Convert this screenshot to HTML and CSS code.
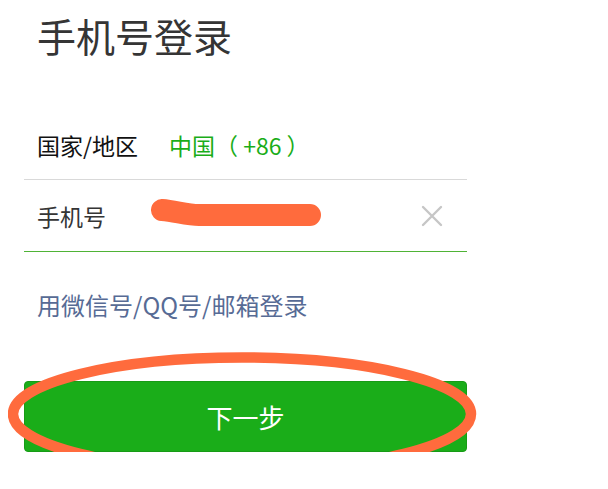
FILE: index.html
```html
<!DOCTYPE html>
<html lang="zh-CN">
<head>
    <meta charset="UTF-8">
    <meta name="viewport" content="width=device-width, initial-scale=1.0">
    <title>手机号登录</title>
    <link rel="stylesheet" href="styles.css">
</head>
<body>

    <h1 class="title">手机号登录</h1>

    <section class="form">
        <div class="row country-row">
            <span class="label">国家/地区</span>
            <span class="country">中国（ +86 ）</span>
        </div>

        <div class="row phone-row">
            <span class="label label-phone">手机号</span>
            <span class="phone-input"></span>
            <svg class="clear-icon" width="22" height="22" viewBox="0 0 22 22">
                <path d="M2 2 L20 20 M20 2 L2 20" stroke="#c6c6c6" stroke-width="2.4" stroke-linecap="round" fill="none"/>
            </svg>
            <!-- redaction scribble -->
            <svg class="scribble" width="180" height="34" viewBox="0 0 180 34">
                <path d="M11 11 C 24 12, 36 16, 48 16 L 159 16" stroke="#ff6b3d" stroke-width="22" stroke-linecap="round" stroke-linejoin="round" fill="none"/>
            </svg>
        </div>

        <a class="alt-login" href="#">用微信号/QQ号/邮箱登录</a>

        <div class="button-wrap">
            <button class="next-btn">下一步</button>
            <svg class="circle-mark" width="480" height="134" viewBox="0 0 480 134">
                <ellipse cx="234" cy="67" rx="229" ry="56.5" stroke="#ff6b3d" stroke-width="10.5" fill="none"/>
            </svg>
        </div>
    </section>

</body>
</html>
```

FILE: styles.css
```css
* {
    margin: 0;
    padding: 0;
    box-sizing: border-box;
}

body {
    background: #ffffff;
    font-family: "Noto Sans CJK SC", "Noto Sans", sans-serif;
    width: 608px;
    padding-left: 24px;
}

.title {
    font-size: 39px;
    font-weight: normal;
    color: #353535;
    line-height: 70px;
    padding-left: 13px;
}

.form {
    width: 443px;
    margin-top: 40px;
}

.row {
    display: flex;
    align-items: center;
    padding-left: 13px;
    font-size: 23px;
    position: relative;
}

.country-row {
    height: 70px;
    border-bottom: 1px solid #d9d9d9;
}

.phone-row {
    height: 72px;
    border-bottom: 1px solid #4fb336;
}

.label {
    color: #111;
    width: 132px;
}

.label-phone {
    color: #353535;
}

.country {
    color: #1aad19;
}

.phone-input {
    flex: 1;
}

.clear-icon {
    margin-right: 24px;
}

.scribble {
    position: absolute;
    left: 127px;
    top: 19px;
}

.alt-login {
    display: block;
    margin-top: 38px;
    padding-left: 13px;
    font-size: 24px;
    line-height: 30px;
    color: #576b95;
    text-decoration: none;
}

.button-wrap {
    position: relative;
    margin-top: 61px;
}

.next-btn {
    display: block;
    width: 443px;
    height: 71px;
    background: #1aad19;
    border: 1px solid #179b16;
    border-radius: 4px;
    color: #ffffff;
    font-family: "Noto Sans CJK SC", sans-serif;
    font-size: 26px;
}

.circle-mark {
    position: absolute;
    left: -16px;
    top: -34px;
}
```
